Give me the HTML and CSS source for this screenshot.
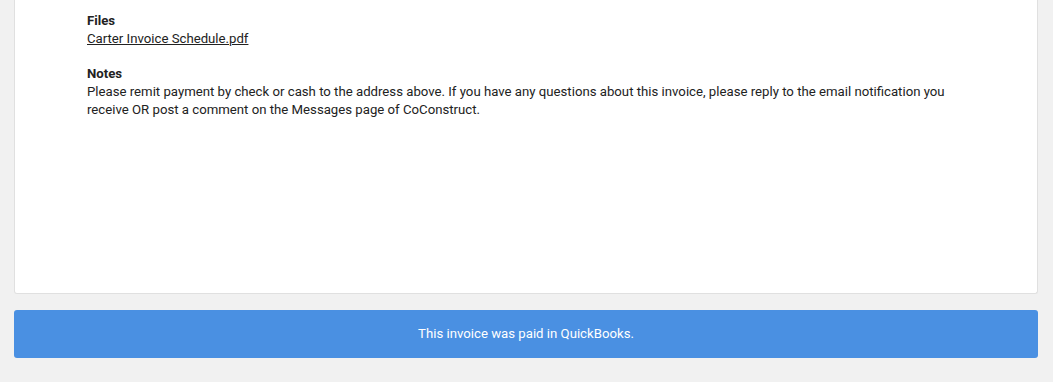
FILE: index.html
```html
<!DOCTYPE html>
<html>
<head>
    <title>Invoice</title>
    <link rel="stylesheet" href="styles.css">
</head>
<body>
    <div id="invoice-page">
        <div class="invoice-card">
            <div class="invoice-section">
                <div class="section-label">Files</div>
                <a href="#" class="file-link">Carter Invoice Schedule.pdf</a>
            </div>
            <div class="invoice-section">
                <div class="section-label">Notes</div>
                <p class="notes-text">Please remit payment by check or cash to the address above. If you have any questions about this invoice, please reply to the email notification you receive OR post a comment on the Messages page of CoConstruct.</p>
            </div>
        </div>
        <div class="paid-banner">This invoice was paid in QuickBooks.</div>
    </div>
</body>
</html>
```

FILE: styles.css
```css
body {
    margin: 0;
    font-family: Roboto, "Liberation Sans", sans-serif;
    font-size: 13.2px;
    line-height: 18px;
    color: #222;
    background-color: #f1f1f1;
}

#invoice-page {
    padding: 0 15px 24px 14px;
}

.invoice-card {
    background-color: #fff;
    border: 1px solid #e0e0e0;
    border-top: none;
    border-radius: 0 0 3px 3px;
    padding: 12px 72px 174px 72px;
}

.invoice-section {
    margin-bottom: 17px;
}

.invoice-section:last-child {
    margin-bottom: 0;
}

.section-label {
    font-weight: bold;
}

.file-link {
    color: #222;
    text-decoration: underline;
}

.notes-text {
    margin: 0;
}

.paid-banner {
    margin-top: 16px;
    height: 48px;
    line-height: 48px;
    background-color: #4a90e2;
    border-radius: 3px;
    color: #fff;
    text-align: center;
}
```
